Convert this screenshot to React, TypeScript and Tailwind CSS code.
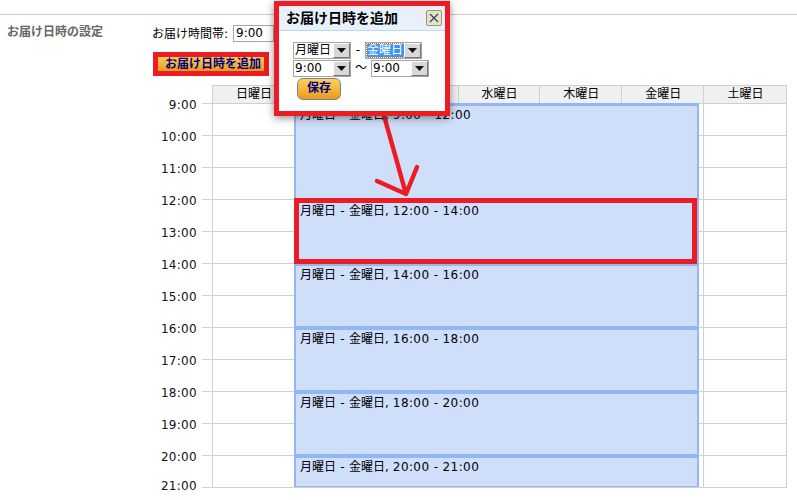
const FONT = "font-['DejaVu_Sans','Noto_Sans_CJK_JP',sans-serif]";
const hours = Array.from({ length: 13 }, (_, i) => `${i + 9}:00`);
const days = ["日曜日", "月曜日", "火曜日", "水曜日", "木曜日", "金曜日", "土曜日"];
const events = [
  { t: "9:00 - 12:00", h: "h-[96px]" },
  { t: "12:00 - 14:00", h: "h-[64px]" },
  { t: "14:00 - 16:00", h: "h-[64px]" },
  { t: "16:00 - 18:00", h: "h-[64px]" },
  { t: "18:00 - 20:00", h: "h-[64px]" },
  { t: "20:00 - 21:00", h: "h-[32px]" },
];

function Sel({ v, w, selected }: { v: string; w: string; selected?: boolean }) {
  return (
    <div className={`${w} h-[17px] flex border border-[#a5a5a5] bg-white text-[12px] leading-[15px] text-black`}>
      <div className="flex-1 min-w-0 pl-[1px]">
        {selected ? <span className="bg-[#3d95f0] text-white block h-[13px] mt-[1px] leading-[13px] whitespace-nowrap outline-1 outline-dotted outline-[#c9782a]">{v}</span> : v}
      </div>
      <div className="w-[17px] h-[15px] bg-[#d8d8d8] border border-t-white border-l-white border-r-[#777] border-b-[#777] flex items-center justify-center">
        <svg width="9" height="5" viewBox="0 0 9 5"><path d="M0 0H9L4.5 5Z" fill="#111" /></svg>
      </div>
    </div>
  );
}

export default function App() {
  return (
    <div className={`${FONT} relative w-[797px] h-[500px] overflow-hidden bg-white text-[12px] text-black`}>
      <div className="h-[15px] border-b border-[#cccccc]" />
      <div className="flex">
        <div className="w-[152px] shrink-0 pl-[7px] pt-[10px] text-[12px] font-bold text-[#666] leading-[14px]">お届け日時の設定</div>
        <div className="flex-1">
          <div className="flex items-center h-[17px] mt-[10px] gap-[2px] leading-[14px]">
            <span className="w-[79px]">お届け時間帯:</span>
            <div className="w-[41px] h-[17px] border border-[#a5a5a5] px-[2px] leading-[15px]">9:00</div>
          </div>
          <div className="ml-[6px] mt-[14px] w-[106px] h-[15px] bg-gradient-to-b from-[#ffd25a] to-[#e89b12] text-[12px] font-bold text-[#000080] pl-[7px] leading-[16px] whitespace-nowrap">お届け日時を追加</div>
        </div>
      </div>

      <div className="ml-[160px] mt-[14px]">
        <div className="ml-[52px] flex h-[18px] w-[575px] border border-b-0 border-[#d0d0d0] bg-[#f0f0f0]">
          {days.map((d, i) => (
            <div key={d} className={`w-[82px] text-center leading-[16px] pl-[1px] ${i < 6 ? "border-r border-[#d0d0d0]" : ""}`}>{d}</div>
          ))}
        </div>
        <div className="flex relative">
          <div className="w-[52px] -mt-[16px] shrink-0">
            {hours.map((h, i) => (
              <div key={h} className="h-[32px] flex items-center justify-end text-[#111]">
                <span className={`mr-[5px] relative tracking-[0.3px] ${i === 12 ? "-top-[1px]" : "top-[2px]"}`}>{h}</span>
                <span className="w-[10px] border-t border-[#d0d0d0]" />
              </div>
            ))}
          </div>
          <div className="relative w-[575px] h-[385px] border-x border-b border-[#d0d0d0]">
            {hours.slice(0, 12).map((h) => (
              <div key={h} className="h-[32px] border-t border-[#d0d0d0] flex">
                {days.map((d, i) => (
                  <div key={d} className={`w-[82px] ${i < 6 ? "border-r border-[#d0d0d0]" : ""}`} />
                ))}
              </div>
            ))}
            <div className="absolute left-[81px] top-0 w-[405px] flex flex-col">
              {events.map((e) => (
                <div key={e.t} className={`${e.h} border-[2px] border-t-[3px] border-b-[1px] border-[#94b6f5] bg-[#cfdff9] pl-[4px] pt-[2px] leading-[15px] flex whitespace-nowrap`}>
                  <span>月曜日</span>
                  <span className="w-[13px] text-center">-</span>
                  <span>金曜日,</span>
                  <span className="ml-[4px] tracking-[0.4px]">{e.t}</span>
                </div>
              ))}
            </div>
          </div>
        </div>
      </div>

      {/* annotation: button highlight */}
      <div className="absolute left-[153px] top-[52px] w-[116px] h-[24px] border-[5px] border-[#ed1c24]" />
      {/* annotation: event highlight */}
      <div className="absolute left-[294px] top-[198px] w-[403px] h-[66px] border-[5px] border-[#ed1c24]" />
      {/* annotation: arrow */}
      <svg className="absolute left-0 top-0" width="797" height="500" fill="none">
        <path d="M383 112L406 194M377 181L406 194L417 167" stroke="#ed1c24" strokeWidth="4.5" strokeLinecap="round" strokeLinejoin="round" />
      </svg>

      {/* popup */}
      <div className="absolute left-[274px] top-[1px] w-[176px] h-[115px] border-[5px] border-[#ed1c24] bg-white shadow-[0_2px_8px_rgba(0,0,0,0.45)]">
        <div className="h-[25px] bg-[#e8f1fb] border-b border-[#b9d7ef] flex items-center justify-between pl-[7px] pr-[3px]">
          <span className="text-[14px] font-bold leading-[16px]">お届け日時を追加</span>
          <div className="w-[16px] h-[16px] rounded-[2px] border border-[#9a9a70] bg-[#e6e2c4] flex items-center justify-center">
            <svg width="10" height="10" viewBox="0 0 10 10"><path d="M1 1L9 9M9 1L1 9" stroke="#333a66" strokeWidth="1.1" /></svg>
          </div>
        </div>
        <div className="pl-[14px] pt-[10px]">
          <div className="flex items-center">
            <Sel v="月曜日" w="w-[58px]" />
            <span className="w-[14px] text-center">-</span>
            <Sel v="金曜日" w="w-[57px]" selected />
          </div>
          <div className="flex items-center">
            <Sel v="9:00" w="w-[58px]" />
            <span className="w-[20px] text-center">～</span>
            <Sel v="9:00" w="w-[58px]" />
          </div>
          <div className="ml-[4px] mt-[1px] w-[44px] h-[22px] rounded-[6px] border border-[#7a7f96] bg-gradient-to-b from-[#ffd25a] to-[#e89b12] text-center text-[12px] font-bold leading-[18px] text-[#000080]">保存</div>
        </div>
      </div>
    </div>
  );
}
